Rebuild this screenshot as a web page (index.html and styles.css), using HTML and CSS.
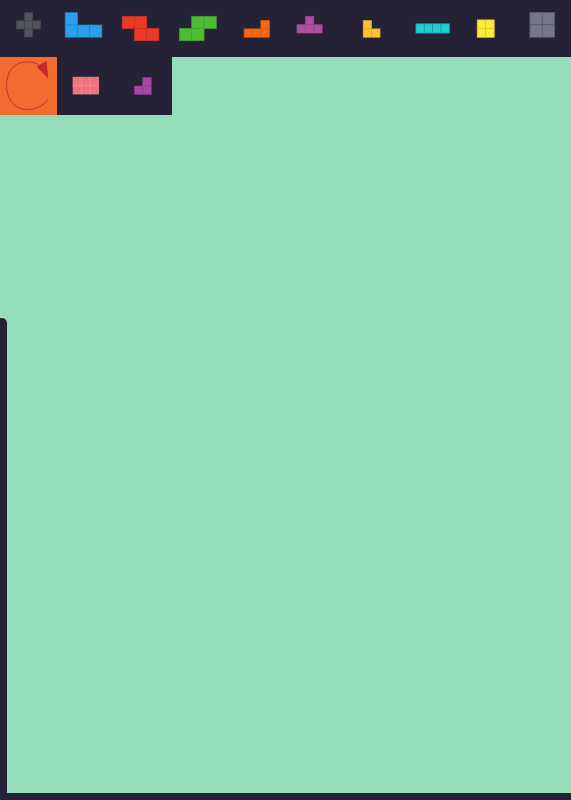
FILE: index.html
```html
<!DOCTYPE html>
<html lang="en">
<head>
<meta charset="utf-8">
<title>Block puzzle</title>
<link rel="stylesheet" href="styles.css">
</head>
<body>
<div class="app">
  <div class="tools">
    <div class="tool">
      <svg class="piece plus" viewBox="0 0 57.1 57"><rect x="24.6" y="12.6" width="8" height="8.2"/><rect x="16.4" y="20.8" width="8.2" height="8.2"/><rect x="24.6" y="20.8" width="8" height="8.2"/><rect x="32.6" y="20.8" width="8" height="8.2"/><rect x="24.6" y="29" width="8" height="8"/></svg>
    </div>
    <div class="tool">
      <svg class="piece blue" viewBox="57.1 0 57.1 57"><rect x="65.3" y="12.7" width="12.3" height="12.3"/><rect x="65.3" y="25" width="12.3" height="12.2"/><rect x="77.6" y="25" width="12.2" height="12.2"/><rect x="89.8" y="25" width="12.2" height="12.2"/></svg>
    </div>
    <div class="tool">
      <svg class="piece red" viewBox="114.2 0 57.1 57"><rect x="122.5" y="16.3" width="12.2" height="12.2"/><rect x="134.7" y="16.3" width="12.2" height="12.2"/><rect x="134.7" y="28.5" width="12.2" height="12.2"/><rect x="146.9" y="28.5" width="12.2" height="12.2"/></svg>
    </div>
    <div class="tool">
      <svg class="piece green" viewBox="171.3 0 57.1 57"><rect x="192" y="16.3" width="12.3" height="12.2"/><rect x="204.3" y="16.3" width="12.3" height="12.2"/><rect x="179.7" y="28.5" width="12.3" height="12.2"/><rect x="192" y="28.5" width="12.3" height="12.2"/></svg>
    </div>
    <div class="tool">
      <svg class="piece orange" viewBox="228.4 0 57.1 57"><rect x="261.3" y="20.5" width="8.4" height="8.4"/><rect x="244.5" y="28.9" width="8.4" height="8.3"/><rect x="252.9" y="28.9" width="8.4" height="8.3"/><rect x="261.3" y="28.9" width="8.4" height="8.3"/></svg>
    </div>
    <div class="tool">
      <svg class="piece purple" viewBox="285.5 0 57.1 57"><rect x="305.9" y="16.3" width="8.4" height="8.4"/><rect x="297.5" y="24.7" width="8.4" height="8.3"/><rect x="305.9" y="24.7" width="8.4" height="8.3"/><rect x="314.3" y="24.7" width="8.4" height="8.3"/></svg>
    </div>
    <div class="tool">
      <svg class="piece amber" viewBox="342.6 0 57.1 57"><rect x="362.8" y="20.5" width="8.4" height="8.4"/><rect x="362.8" y="28.9" width="8.4" height="8.3"/><rect x="371.2" y="28.9" width="8.4" height="8.3"/></svg>
    </div>
    <div class="tool">
      <svg class="piece cyan" viewBox="399.7 0 57.1 57"><rect x="415.6" y="23.8" width="8.4" height="9.3"/><rect x="424" y="23.8" width="8.4" height="9.3"/><rect x="432.4" y="23.8" width="8.4" height="9.3"/><rect x="440.8" y="23.8" width="8.4" height="9.3"/></svg>
    </div>
    <div class="tool">
      <svg class="piece lemon" viewBox="456.8 0 57.1 57"><rect x="477" y="19.9" width="8.5" height="8.7"/><rect x="485.5" y="19.9" width="8.5" height="8.7"/><rect x="477" y="28.6" width="8.5" height="8.7"/><rect x="485.5" y="28.6" width="8.5" height="8.7"/></svg>
    </div>
    <div class="tool">
      <svg class="piece slate" viewBox="513.9 0 57.1 57"><rect x="529.8" y="12.4" width="12.4" height="12.4"/><rect x="542.2" y="12.4" width="12.4" height="12.4"/><rect x="529.8" y="24.8" width="12.4" height="12.4"/><rect x="542.2" y="24.8" width="12.4" height="12.4"/></svg>
    </div>
  </div>
  <div class="tools tools-second">
    <div class="tool tool-active">
      <svg class="rotate" viewBox="0 57 57.1 57"><path class="rotate-line" d="M47.5 99.5C44 106 35.5 109.5 26 109.5C14 109.5 6.5 98 6.5 85.5C6.5 72 14 62 26 62C31 62 35 62.5 40 65.5"/><path class="rotate-head" d="M36.6 66.8L46.6 60.8L48.3 78.4Z"/></svg>
    </div>
    <div class="tool">
      <svg class="piece pink" viewBox="57.1 57 57.1 57"><rect x="73.2" y="77.2" width="8.5" height="8.4"/><rect x="81.7" y="77.2" width="8.5" height="8.4"/><rect x="90.2" y="77.2" width="8.5" height="8.4"/><rect x="73.2" y="85.6" width="8.5" height="8.4"/><rect x="81.7" y="85.6" width="8.5" height="8.4"/><rect x="90.2" y="85.6" width="8.5" height="8.4"/></svg>
    </div>
    <div class="tool">
      <svg class="piece magenta" viewBox="114.2 57 57.1 57"><rect x="143" y="77.6" width="8.4" height="8.4"/><rect x="134.6" y="86" width="8.4" height="8.4"/><rect x="143" y="86" width="8.4" height="8.4"/></svg>
    </div>
  </div>
  <div class="board">
    <div class="board-top"></div>
    <div class="board-main">
      <div class="rail"></div>
      <div class="field"></div>
    </div>
  </div>
  <div class="footer"></div>
</div>
</body>
</html>
```

FILE: styles.css
```css
html, body {
  margin: 0;
  padding: 0;
}

body {
  background: #95dcba;
  font-family: "Liberation Sans", sans-serif;
}

.app {
  display: flex;
  flex-direction: column;
  height: 800px;
  overflow: hidden;
  background: #95dcba;
}

.tools {
  display: flex;
  flex: none;
  width: 571px;
  height: 57.3px;
  background: #252238;
}

.tools-second {
  width: 171.5px;
}

.tool {
  flex: 0 0 57.1px;
  height: 57.3px;
}

.tool-active {
  background: #f26c30;
}

.tool svg {
  display: block;
  width: 57.1px;
  height: 57px;
}

.piece rect {
  stroke-width: 0.7;
}

.plus rect { fill: #50525f; stroke: #43454f; }
.blue rect { fill: #2ba0ea; stroke: #1e85cf; }
.red rect { fill: #e83b25; stroke: #cf3322; }
.green rect { fill: #4cbd34; stroke: #3fa52d; }
.orange rect { fill: #fa650f; stroke: #dd5a10; }
.purple rect { fill: #b14e9f; stroke: #9a4590; }
.amber rect { fill: #fdc535; stroke: #e9a925; }
.cyan rect { fill: #1ed0d2; stroke: #1596b5; }
.lemon rect { fill: #fdeb3b; stroke: #e3c92c; }
.slate rect { fill: #757786; stroke: #5b5c6e; }
.pink rect { fill: #ee737d; stroke: #f58f93; }
.magenta rect { fill: #ac44a6; stroke: #8e3a8e; }

.rotate-line {
  fill: none;
  stroke: #c42f2c;
  stroke-width: 1;
}

.rotate-head {
  fill: #c4292d;
}

.board {
  display: flex;
  flex: 1;
  flex-direction: column;
  min-height: 0;
}

.board-top {
  flex: none;
  height: 203.4px;
}

.board-main {
  display: flex;
  flex: 1;
  min-height: 0;
}

.rail {
  flex: none;
  width: 7px;
  background: #252238;
  border-top-right-radius: 5px;
}

.field {
  flex: 1;
}

.footer {
  flex: none;
  height: 7px;
  background: #252238;
}
```
